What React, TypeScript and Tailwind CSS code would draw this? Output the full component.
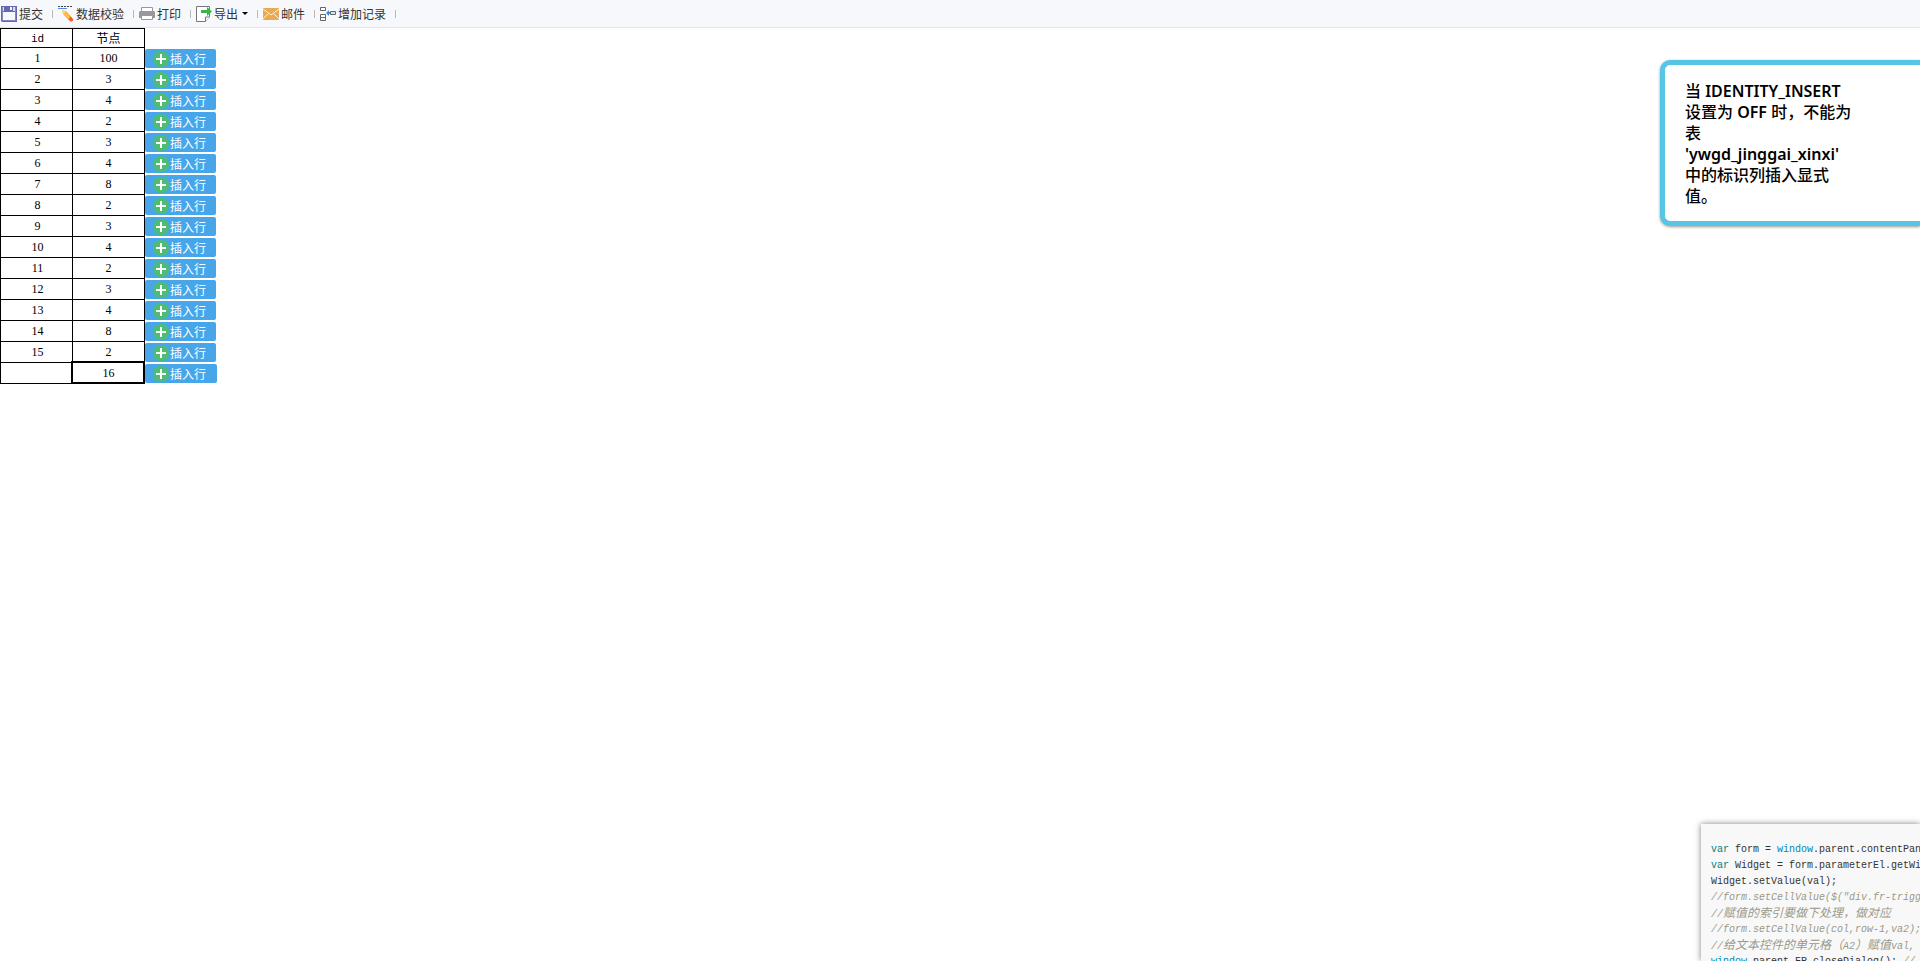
import React from "react";

type Row = { id: string; node: string };

const rows: Row[] = [
  { id: "1", node: "100" },
  { id: "2", node: "3" },
  { id: "3", node: "4" },
  { id: "4", node: "2" },
  { id: "5", node: "3" },
  { id: "6", node: "4" },
  { id: "7", node: "8" },
  { id: "8", node: "2" },
  { id: "9", node: "3" },
  { id: "10", node: "4" },
  { id: "11", node: "2" },
  { id: "12", node: "3" },
  { id: "13", node: "4" },
  { id: "14", node: "8" },
  { id: "15", node: "2" },
  { id: "", node: "16" },
];

function SaveIcon() {
  return (
    <svg className="size-4" viewBox="0 0 16 16" aria-hidden="true">
      <path d="M0 0h16v16H1l-1-1z" fill="#6668ad" />
      <path d="M1 1h1v5h12V1h1v14H1z" fill="#8385c0" />
      <path d="M2 6h12v8H2z" fill="#f6f8fb" />
      <path d="M2 1h1v4H2zM12 1h2v4h-2z" fill="#dcdded" />
      <path d="M9 1h2v3H9z" fill="#f6f8fb" />
    </svg>
  );
}

function VerifyIcon() {
  return (
    <svg className="size-4" viewBox="0 0 16 16" aria-hidden="true">
      <path d="M0 .5h14" stroke="#444" strokeDasharray="2 1" />
      <path d="M0 2.500h9" stroke="#4a8fe0" />
      <path d="M4 4l4 1 6 6.500-3 3-6-6.500z" fill="#fbb03b" />
      <path d="M4 4l4 1-3 3z" fill="#f7d9a0" />
      <path d="M6 6.500l6 6.500" stroke="#fdd27a" />
      <path d="M12.500 10.500l2.500 2.500v1.500l-1 1h-1.500l-2-2z" fill="#f15a2b" />
    </svg>
  );
}

function PrintIcon() {
  return (
    <svg className="size-4" viewBox="0 0 16 16" aria-hidden="true">
      <path d="M2.500 6V1.500h11V6" fill="#fff" stroke="#999" />
      <path d="M1 5h14l1 1v6H0V6z" fill="#999" />
      <path d="M2.500 9.500h11v4h-11z" fill="#fff" stroke="#999" />
    </svg>
  );
}

function ExportIcon() {
  return (
    <svg className="size-4" viewBox="0 0 16 16" aria-hidden="true">
      <path d="M.5.5h13v10l-4 5h-9z" fill="#fff" stroke="#777" />
      <path d="M9.500 15.500v-4.500h4" fill="#fff" stroke="#777" />
      <path d="M5 4h6V1l5 4.500-5 4.500V7H5z" fill="#39b54a" />
    </svg>
  );
}

function MailIcon() {
  return (
    <svg className="size-4" viewBox="0 0 16 16" aria-hidden="true">
      <path d="M0 2h16v12H0z" fill="#e9ab51" />
      <path d="M0 3l8 6 8-6M0 13l5.500-5.500M16 13l-5.500-5.500" fill="none" stroke="#fbf0dc" />
    </svg>
  );
}

function AddRecordIcon() {
  return (
    <svg className="size-4" viewBox="0 0 16 16" aria-hidden="true">
      <path d="M.5 1.500h5v3h-5zM.5 8.500h5v6h-5zM.5 11.500h5" fill="#fff" stroke="#666" />
      <path d="M10.500 5.500h5v3h-5z" fill="#cde6fa" stroke="#666" />
      <path d="M6 7l3-3v2h1v2H9v2z" fill="#2f8df0" />
    </svg>
  );
}

function AddIcon() {
  return (
    <svg className="size-4" viewBox="0 0 16 16" aria-hidden="true">
      <circle cx="8" cy="8" r="8" fill="#4dbd74" />
      <path d="M3 7h10v2H3zM7 3h2v10H7z" fill="#fff" />
    </svg>
  );
}

function ToolbarButton({
  icon,
  label,
  menu,
}: {
  icon: React.ReactNode;
  label: string;
  menu?: boolean;
}) {
  return (
    <>
      <button type="button" className="flex items-center gap-0.5 whitespace-nowrap">
        {icon}
        <span>{label}</span>
        {menu && (
          <svg className="ml-0.5 h-1 w-1.5" viewBox="0 0 6 4" aria-hidden="true">
            <path d="M0 0h6L3 3z" fill="#000" />
          </svg>
        )}
      </button>
      <span className="mr-[5px] ml-[9px] h-2 w-px bg-[#bbbbbb]" />
    </>
  );
}

function Toolbar() {
  return (
    <div
      role="toolbar"
      className="flex h-7 items-center border-b border-[#e3e5e9] bg-[#f6f8fb] pl-px text-xs text-[#333333]"
    >
      <ToolbarButton icon={<SaveIcon />} label="提交" />
      <ToolbarButton icon={<VerifyIcon />} label="数据校验" />
      <ToolbarButton icon={<PrintIcon />} label="打印" />
      <ToolbarButton icon={<ExportIcon />} label="导出" menu />
      <ToolbarButton icon={<MailIcon />} label="邮件" />
      <ToolbarButton icon={<AddRecordIcon />} label="增加记录" />
    </div>
  );
}

function DataTable() {
  return (
    <table className="table-fixed border-separate border-spacing-0 text-center font-['Liberation_Serif','Noto_Sans_CJK_SC',serif] text-xs leading-4 text-black">
      <thead>
        <tr className="h-5">
          <th className="w-[73px] border border-black p-0 pt-px pl-0.5 font-['Liberation_Mono',monospace] text-[11px] font-normal">id</th>
          <th className="w-[72px] border-y border-r border-black p-0 pt-px font-normal">节点</th>
          <td className="w-[72px] p-0" />
        </tr>
      </thead>
      <tbody>
        {rows.map((row, i) => {
          const last = i === rows.length - 1;
          return (
            <tr key={i} className="h-[21px]">
              <td className="border-x border-b border-black p-0 pl-0.5">{row.id}</td>
              <td className="relative border-r border-b border-black p-0">
                {row.node}
                {last && <span className="absolute -top-0.5 -right-px -bottom-px -left-0.5 border-2 border-black" />}
              </td>
              <td className="p-0">
                <button
                  type="button"
                  className={`flex h-[19px] items-center gap-px rounded-xs bg-[#47a5ea] pl-2 font-['Noto_Sans_CJK_SC',sans-serif] whitespace-nowrap text-white ${last ? "w-[72px]" : "w-[71px]"}`}
                >
                  <AddIcon />
                  插入行
                </button>
              </td>
            </tr>
          );
        })}
      </tbody>
    </table>
  );
}

function ErrorToast() {
  return (
    <div
      role="alert"
      className="absolute top-[60px] right-0 w-[260px] rounded-l-[10px] border-y-[5px] border-l-[5px] border-[#56c5e6] bg-white px-5 pt-4 pb-3.5 font-['Noto_Sans','Noto_Sans_CJK_SC',sans-serif] text-base leading-[21px] font-medium whitespace-nowrap text-black shadow-[0_1px_3px_rgba(0,0,0,0.4)]"
    >
      当 <span className="font-semibold">IDENTITY_INSERT</span>
      <br />
      设置为 <span className="font-semibold">OFF</span> 时，不能为
      <br />
      表
      <br />
      <span className="font-semibold">'ywgd_jinggai_xinxi'</span>
      <br />
      中的标识列插入显式
      <br />
      值。
    </div>
  );
}

function CodePanel() {
  return (
    <div className="absolute right-0 bottom-0 h-[137px] w-[219px] overflow-hidden bg-[#f8f8f8] pt-[18px] pl-2.5 font-['Liberation_Mono','Noto_Sans_CJK_SC',monospace] text-[10px] leading-4 whitespace-pre text-[#333333] shadow-[0_0_6px_rgba(0,0,0,0.5)]">
      <div>
        <span className="text-[#008080]">var</span> form = <span className="text-[#0086b3]">window</span>
        .parent.contentPan
      </div>
      <div>
        <span className="text-[#008080]">var</span> Widget = form.parameterEl.getWi
      </div>
      <div>Widget.setValue(val);</div>
      <div className="text-[#999988] italic">
        <div>{'//form.setCellValue($("div.fr-trigg'}</div>
        <div className="h-4">
          //<span className="text-xs leading-4">赋值的索引要做下处理，做对应</span>
        </div>
        <div>//form.setCellValue(col,row-1,va2);</div>
        <div className="h-4">
          //<span className="text-xs leading-4">给文本控件的单元格（</span>A2
          <span className="text-xs leading-4">）赋值</span>val,
        </div>
      </div>
      <div>
        <span className="text-[#0086b3]">window</span>.parent.FR.closeDialog();{" "}
        <span className="text-[#999988] italic">//</span>
      </div>
    </div>
  );
}

export default function App() {
  return (
    <div className="relative min-h-screen overflow-hidden bg-white font-['Noto_Sans_CJK_SC',sans-serif]">
      <Toolbar />
      <DataTable />
      <ErrorToast />
      <CodePanel />
    </div>
  );
}
